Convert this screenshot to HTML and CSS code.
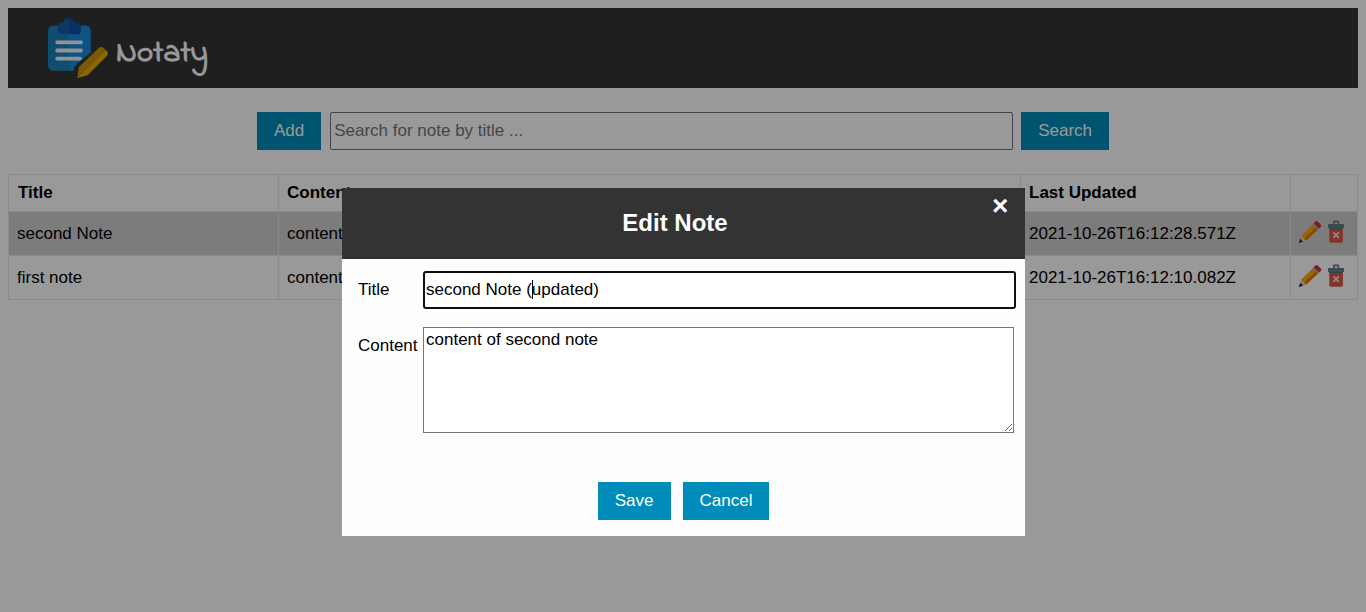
FILE: index.html
```
<!DOCTYPE html>
<html lang="en">
<head>
<meta charset="utf-8">
<title>Notaty</title>
<link rel="stylesheet" href="styles.css">
</head>
<body>
<svg class="sprites" aria-hidden="true">
  <symbol id="pencil" viewBox="0 0 24 24">
    <path fill="#ffa71c" d="M15.600 3.400 20.800 8.600 8 20.800 3 15.800z"/>
    <path fill="#d98000" d="M18.800 6.600 20.800 8.600 8 20.800 6 18.800z"/>
    <path fill="#ead0a8" d="M3 15.800 8 20.800 1.200 22.800z"/>
    <path fill="#362080" d="M2.200 18.800 5.200 21.700 .8 23z"/>
    <path fill="#b0a7ac" d="m14.400 4.600 1.500-1.500 5.200 5.200-1.500 1.500z"/>
    <path fill="#d92d3f" d="m15.700 3.200 1.500-1.600c.8-.8 1.700-.8 2.500 0l3 3c.8.800.8 1.700 0 2.500L21 8.500z"/>
  </symbol>
  <symbol id="trash" viewBox="0 0 24 24">
    <path fill="#dd5741" d="M5.300 8h13.600v13c0 1.200-.6 1.700-1.700 1.700H7c-1.200 0-1.700-.5-1.700-1.700z"/>
    <path fill="#587479" d="M5.300 8h13.600v1.200H5.300z"/>
    <path fill="#607f86" fill-rule="evenodd" d="M9 4V1.800C9 1 9.400.6 10.200.6H14c.8 0 1.200.4 1.200 1.200V4h3.700c.8 0 1.200.4 1.200 1.200V8H4V5.200C4 4.400 4.400 4 5.200 4zm1.700 0h2.800V2.200h-2.800z"/>
    <path stroke="#f3dfdb" stroke-width="1.900" d="m9.300 12.300 5.600 5.600m0-5.600-5.600 5.600"/>
  </symbol>
</svg>

<header class="topbar">
  <svg class="logo" viewBox="0 0 60 60" aria-hidden="true">
    <path fill="#1c83bd" d="M6 7.500h15v45.300H6c-4 0-6-2-6-6V13.500c0-4 2-6 6-6z"/>
    <path fill="#1a8ae0" d="M21 7.500h15.500c4 0 6.300 2 6.300 6V35L28 47.500c-2.300 2-2.500 3-2.500 5.300H21z"/>
    <path fill="#165da8" d="M21 0c-3 0-5 1.600-6.300 4.800H13c-2 0-3 1-3 3V13c0 2 1.200 3.200 3.200 3.200H21z"/>
    <path fill="#1250a0" d="M21 0c3 0 5 1.600 6.300 4.800H30c2 0 3 1 3 3V13c0 2-1.200 3.200-3.200 3.200H21z"/>
    <path stroke="#f5f5f8" stroke-width="3.800" stroke-linecap="round" d="M9.200 24.300H33M9.200 32.500H33M9.200 40.600H32"/>
    <path fill="#353535" d="M43.500 34 29.500 45.200q-3 2.800-3.500 8v2h5L45 37z"/>
    <path fill="#cc9409" d="m29.200 60 1.700-11L50.500 30.200c1.800-1.700 3.600-1.500 5.200.1l1.800 1.600z"/>
    <path fill="#f2ab00" d="m29.200 60 28.300-28.100 1.200 1.200c1.600 1.600 1.600 3.300.1 4.800L39.500 57.200z"/>
  </svg>
  <span class="brand">Notaty</span>
</header>

<main>
  <div class="toolbar">
    <button class="btn">Add</button>
    <input class="search" type="text" placeholder="Search for note by title ...">
    <button class="btn">Search</button>
  </div>
  <table class="notes">
    <colgroup><col class="c-title"><col class="c-content"><col class="c-date"><col class="c-actions"></colgroup>
    <tr class="head"><th class="first">Title</th><th>Content</th><th>Last Updated</th><th></th></tr>
    <tr class="active"><td>second Note</td><td>content</td><td>2021-10-26T16:12:28.571Z</td>
      <td><div class="actions"><svg><use href="#pencil"/></svg><svg><use href="#trash"/></svg></div></td></tr>
    <tr><td>first note</td><td>content</td><td>2021-10-26T16:12:10.082Z</td>
      <td><div class="actions"><svg><use href="#pencil"/></svg><svg><use href="#trash"/></svg></div></td></tr>
  </table>
</main>

<div class="overlay">
  <section class="modal">
    <div class="modal-head">
      <h2>Edit Note</h2>
      <span class="close">&times;</span>
    </div>
    <div class="form">
      <label for="title">Title</label>
      <div class="field"><input id="title" type="text" value="second Note (updated)"><i class="caret"></i></div>
      <label for="content">Content</label>
      <textarea id="content">content of second note</textarea>
    </div>
    <div class="buttons">
      <button class="btn save">Save</button>
      <button class="btn">Cancel</button>
    </div>
  </section>
</div>
</body>
</html>
```
FILE: styles.css
```
* { box-sizing: border-box; }
html { overflow: hidden; }
body {
  margin: 8px;
  background: #fff;
  color: #000;
  font: 17px/20px "Liberation Sans", Arial, sans-serif;
}
.sprites { position: absolute; width: 0; height: 0; }
.topbar {
  display: flex;
  height: 80px;
  padding: 10px 40px;
  background: #353535;
}
.logo { width: 60px; height: 60px; fill: none; }
.brand {
  padding: 18px 0 0 8px;
  color: #fff;
  font: 31px/36px "Indie Flower", cursive;
  -webkit-text-stroke: 1.2px #fff;
}
.toolbar {
  display: flex;
  justify-content: center;
  padding: 24px 0;
}
.btn {
  height: 38px;
  padding: 0 17px;
  border: 0;
  border-radius: 0;
  background: #008cba;
  color: #fff;
  font: inherit;
}
.save { width: 73px; }
.search {
  width: 683px;
  height: 38px;
  margin: 0 8px 0 9px;
  padding: 0 3px;
  border: 1px solid #767676;
  border-radius: 2px;
  font: inherit;
}
.search::placeholder { color: #757575; }
.notes {
  width: 1350px;
  table-layout: fixed;
  border-collapse: collapse;
}
.c-title, .c-date { width: 270px; }
.c-content { width: 742px; }
.c-actions { width: 67px; }
.notes th, .notes td {
  padding: 0 8px;
  border: 1px solid #e8e8e8;
  text-align: left;
}
.notes tr { height: 44px; }
.notes .head { height: 37px; }
.notes .head th { padding-bottom: 1px; }
.notes .head .first { padding-left: 9px; }
.active { background: #cfcfcf; }
.actions { display: flex; gap: 2px; margin: -4px 0 0 -1px; }
.actions svg { width: 24px; height: 24px; flex: none; }
.overlay {
  position: fixed;
  inset: 0;
  padding-top: 188px;
  background: rgba(0, 0, 0, .4);
}
.modal {
  width: 683px;
  height: 348px;
  margin-left: 342px;
  background: #fefefe;
}
.modal-head {
  display: flex;
  height: 71px;
  padding: 0 16px;
  background: #333;
  color: #fff;
}
.modal-head h2 {
  flex: 1;
  margin: 21px 0 0;
  text-align: center;
  font-size: 24px;
  line-height: 28px;
}
.close {
  width: 17px;
  padding-top: 2px;
  font-size: 28px;
  font-weight: bold;
  line-height: 32px;
}
.form {
  display: grid;
  grid-template-columns: 65px 593px;
  grid-template-rows: 38px 106px;
  row-gap: 18px;
  padding: 12px 0 0 16px;
}
.form label { padding-top: 9px; }
.field { position: relative; }
.field input {
  width: 593px;
  height: 38px;
  padding: 0 1px;
  border: 2px solid #101010;
  border-radius: 3px;
  font: inherit;
}
.caret {
  position: absolute;
  left: 109px;
  top: 9px;
  width: 1px;
  height: 19px;
  background: #000;
}
.form textarea {
  width: 591px;
  height: 106px;
  padding: 2px;
  border: 1px solid #767676;
  border-radius: 0;
  font: inherit;
}
.buttons {
  display: flex;
  justify-content: center;
  gap: 12px;
  padding-top: 49px;
}
```
